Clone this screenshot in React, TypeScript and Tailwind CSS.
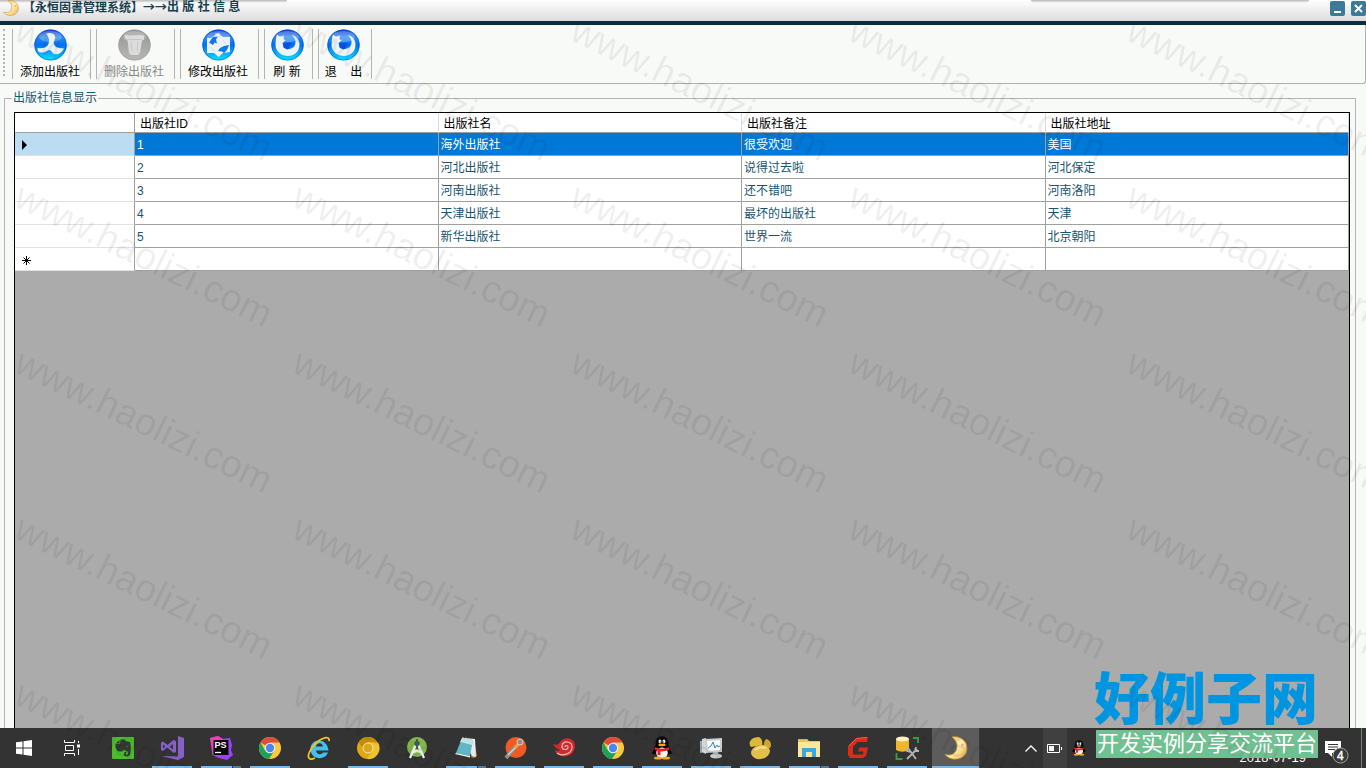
import type { ReactNode } from 'react';

const FONT = 'font-["Liberation_Sans","Noto_Sans_CJK_SC",sans-serif]';

type Publisher = { id: number; name: string; remark: string; address: string };

const publishers: Publisher[] = [
  { id: 1, name: '海外出版社', remark: '很受欢迎', address: '美国' },
  { id: 2, name: '河北出版社', remark: '说得过去啦', address: '河北保定' },
  { id: 3, name: '河南出版社', remark: '还不错吧', address: '河南洛阳' },
  { id: 4, name: '天津出版社', remark: '最坏的出版社', address: '天津' },
  { id: 5, name: '新华出版社', remark: '世界一流', address: '北京朝阳' },
];

const columns = ['出版社ID', '出版社名', '出版社备注', '出版社地址'];

/* ===== Icons ===== */

function Moon({ className }: { className: string }) {
  return (
    <svg viewBox="0 0 24 24" className={className} aria-hidden="true">
      <defs>
        <linearGradient id="moon" x1="0" y1="0" x2="1" y2="1">
          <stop offset="0" stopColor="#f6c14a" />
          <stop offset=".5" stopColor="#fdeeb0" />
          <stop offset="1" stopColor="#eeb345" />
        </linearGradient>
      </defs>
      <path
        d="M8 1c8-1.500 15 3.500 15 11.500S15.500 24 8.500 23C5.500 22.500 2.500 20.500 1 18.500c5.500 1.500 10-.5 11.500-5C14 8.500 12 4 8 1z"
        fill="url(#moon)"
        stroke="#c98c2c"
        strokeWidth=".8"
      />
      <circle cx="18.500" cy="9" r="1.600" fill="#f3a99a" />
    </svg>
  );
}

function Orb({ gray, children }: { gray?: boolean; children: ReactNode }) {
  const fill = gray ? 'url(#orb-gray)' : 'url(#orb-blue)';
  return (
    <svg viewBox="0 0 33 32" className="h-[32px] w-[33px] shrink-0" aria-hidden="true">
      <defs>
        <linearGradient id="orb-blue" x1="0" y1="0" x2="0" y2="1">
          <stop offset="0" stopColor="#0b30d0" />
          <stop offset=".25" stopColor="#2c8cf4" />
          <stop offset=".5" stopColor="#0070f4" />
          <stop offset="1" stopColor="#10e4ff" />
        </linearGradient>
        <linearGradient id="orb-gray" x1="0" y1="0" x2="0" y2="1">
          <stop offset="0" stopColor="#949494" />
          <stop offset=".5" stopColor="#a6a6a6" />
          <stop offset="1" stopColor="#b8b8b8" />
        </linearGradient>
      </defs>
      <ellipse cx="16.500" cy="16" rx="16.200" ry="15.500" fill={fill} />
      <ellipse cx="16.500" cy="16" rx="15.700" ry="15" fill="none" stroke={gray ? '#999' : '#0a50d8'} strokeOpacity=".5" />
      <ellipse cx="16.500" cy="7.500" rx="11.500" ry="5.500" fill="#fff" opacity=".25" />
      {children}
    </svg>
  );
}

function SwirlIcon() {
  return (
    <Orb>
      <path
        d="M12 5c3-2 8-1 9 2 1 3-2 5-1 8 1 4 5 4 10 4.500C28 24 24 26 20 25c-2-1-2-3-4-4-3 0-5 4-11 2-1-1-1.500-2-1.500-4 5 1 9 0 11-4 1-3 1-7-2.500-10z"
        fill="#eef2f3"
      />
    </Orb>
  );
}

function BinIcon() {
  return (
    <Orb gray>
      <path d="M7 6l4 .5L22 6l4 .5v4l-2 1-2 12-2 2.500h-7L11 24 9.500 11 7 9.500z" fill="#dcdcdc" />
      <path d="M9 10.500h15M13 13l1 9M20 13l-1 9" stroke="#c6c6c6" fill="none" />
    </Orb>
  );
}

function EditIcon() {
  return (
    <Orb>
      <path d="M5 9h4l7-5 5 4h7v15l-7 1-4.500 4L12 24H5z" fill="#eef2f3" />
      <path d="M7 13.500l4-5.500 5-.5-2 3 1 4-2.500-1L11 16zM16 22l2-3 4-2 5-1-2 5-3 3-2-1.500z" fill="#0a78f0" />
      <path d="M13 5l4-1 2 3-4 1zM21 11l3 4M9 18l3 4" stroke="#b9d9f6" fill="none" strokeWidth=".8" />
    </Orb>
  );
}

function FoxIcon() {
  return (
    <Orb>
      <path
        d="M6 5.500c1 1 2 2 4 2l3-1-.5 3.500 2 1.500-3 2.500 1 4c2 3 8 3 11-1 2-4 1-8-3-11 5 1 8 5 8 9.500C28.500 23 23 27 17 27S5 23 4.500 16.500c0-4 .5-8 1.500-11z"
        fill="#eef2f3"
      />
      <path d="M12.500 14.500l4-1 5 .500-2 2.500-2 .5 2 1-3 2.500-4-2z" fill="#0a50e0" />
    </Orb>
  );
}

function Chrome() {
  return (
    <svg viewBox="0 0 24 24" className="size-6" aria-hidden="true">
      <circle cx="12" cy="12" r="11" fill="#fbc93d" />
      <path d="M12 12L2.500 6.500A11 11 0 0 1 21.500 6.500H12z" fill="#df4b3d" />
      <path d="M2.500 6.500A11 11 0 0 0 11 23l5.500-8.500L12 12 7 14.500z" fill="#1fa15d" />
      <circle cx="12" cy="12" r="5.300" fill="#f3f3f3" />
      <circle cx="12" cy="12" r="4.200" fill="#4b87ee" />
    </svg>
  );
}

function Penguin({ className }: { className: string }) {
  return (
    <svg viewBox="0 0 24 24" className={className} aria-hidden="true">
      <ellipse cx="12" cy="14" rx="8" ry="8.500" fill="#050505" />
      <path d="M4.500 12L2 17.500l2 1 3-4zM19.500 12l2.500 5.500-2 1-3-4z" fill="#050505" />
      <ellipse cx="12" cy="7" rx="6.500" ry="6.800" fill="#0a0a0a" />
      <ellipse cx="12" cy="17" rx="5.800" ry="5.500" fill="#f5f5f5" />
      <ellipse cx="10" cy="5.500" rx="1.400" ry="2" fill="#fff" />
      <ellipse cx="14" cy="5.500" rx="1.400" ry="2" fill="#fff" />
      <path d="M10.300 5.500v1M13.700 5.500v1" stroke="#000" />
      <ellipse cx="12" cy="9" rx="3.700" ry="1.200" fill="#f6a623" />
      <path d="M5 11q7 3.500 14 0l.5 2.500q-5 2.500-9 2V19H7.500v-4L4.500 13.500z" fill="#e8202a" />
      <ellipse cx="8" cy="22" rx="4" ry="1.500" fill="#f6a623" />
      <ellipse cx="16" cy="22" rx="4" ry="1.500" fill="#f6a623" />
    </svg>
  );
}

function Icon({ children }: { children: ReactNode }) {
  return (
    <svg viewBox="0 0 24 24" className="size-6" fill="none" aria-hidden="true">
      {children}
    </svg>
  );
}

/* ===== Taskbar entries ===== */

type Task = { name: string; icon: ReactNode; running?: boolean; stacked?: boolean; active?: boolean };

const tasks: Task[] = [
  {
    name: 'Evernote',
    icon: (
      <Icon>
        <rect x="1" y="1" width="22" height="22" rx="1" fill="#4dbb2e" />
        <path
          d="M9.500 3.500h4L15 5l4 1c1 2 1 6 .5 10 0 3-1.500 4.500-4 4.500-3.500 0-3.500-5 0-5v1.500c-1.500 0-1 2 .5 1.800 1.500-.3 1-3.300-.5-3.800l-3-1-1 1.500H8c-2.500-.5-4-4-3.500-8h4.500z"
          fill="#323b30"
        />
        <path d="M8.500 4L5 7h3.500z" fill="#323b30" />
        <path d="M15 10.500q1.500-1 2 .5z" fill="#4dbb2e" />
      </Icon>
    ),
  },
  {
    name: 'Visual Studio',
    running: true,
    icon: (
      <Icon>
        <path d="M18 0l6 2v19l-6 3-17-4 17 .5z" fill="#8661c5" />
        <path
          d="M1 6.500L3 5.500l4.500 3.500 6-5 2.500 1v11l-2.500 1-6-5.500L3 15l-2-1zM13 8l-3.500 2.700L13 13.500zM3 8.500v4l2.300-2z"
          fill="#8661c5"
          fillRule="evenodd"
        />
      </Icon>
    ),
  },
  {
    name: 'PhpStorm',
    running: true,
    stacked: true,
    icon: (
      <Icon>
        <path d="M1 2l8-2 5 3 7-1 2 7-1 5 2 5-6 5-8-2-7-3V9z" fill="#9a45f4" />
        <path d="M1 2l8-2 5 3-9 10-2 3z" fill="#f23fb0" />
        <rect x="4.500" y="4" width="15" height="15" fill="#080808" />
        <text x="5.500" y="12" fontSize="9" fontWeight="700" fill="#fff">PS</text>
        <path d="M6 16.500h6" stroke="#fff" strokeWidth="1.300" />
      </Icon>
    ),
  },
  { name: 'Chrome', running: true, icon: <Chrome /> },
  {
    name: 'Internet Explorer',
    icon: (
      <Icon>
        <path
          d="M21.500 14.500H9c.5 4.500 5.500 4.500 7 2h5C18 25 3.500 24 3.500 13S20 1 21.500 14.500zM9 10.500h7c-.5-4.500-6.500-4.500-7 0z"
          fill="#45bff0"
          fillRule="evenodd"
        />
        <path d="M22 5c1-6-8-3-13 2C3 13-1 21 3 23c1 .5 3 0 5-1" stroke="#f3c321" strokeWidth="1.800" />
      </Icon>
    ),
  },
  {
    name: 'Chrome Canary',
    running: true,
    icon: (
      <Icon>
        <circle cx="12" cy="12" r="11" fill="#dfa812" />
        <path d="M2.500 6.500A11 11 0 0 1 21.500 6.500H12L8 14z" fill="#c48d08" />
        <path d="M12 6.500h10A11 11 0 0 1 11 23l5.500-8z" fill="#f0c22c" />
        <circle cx="12" cy="12" r="5" fill="#dba51c" stroke="#f8e8b0" />
      </Icon>
    ),
  },
  {
    name: 'Android Studio',
    icon: (
      <Icon>
        <circle cx="12" cy="11" r="10" fill="#82b94b" />
        <path d="M11 8L5 22M13 8l6 14M7 17q5-4 10 0" stroke="#ececec" strokeWidth="2.200" />
        <circle cx="12" cy="7.500" r="2.800" fill="#455a55" />
        <path d="M12 3v3M12 10v3" stroke="#455a55" strokeWidth="2" />
      </Icon>
    ),
  },
  {
    name: 'Notepad',
    running: true,
    stacked: true,
    icon: (
      <Icon>
        <path d="M20 3l3 17-3 2-3-1z" fill="#b0893f" />
        <path d="M8 2l13 1 1 18-4-1z" fill="#e6ecec" />
        <path d="M8 2l11 2-3 16-14-3z" fill="#5fb6c4" />
        <path d="M8 2l11 2-1 5L6 6z" fill="#bfe2e6" />
        <path d="M2 17l14 3v1.500L1 18z" fill="#f3f5f5" />
        <path d="M9 1v3M12 1.500v3M15 2v3M18 2.500v3" stroke="#d9d9d9" />
      </Icon>
    ),
  },
  {
    name: 'Postman',
    running: true,
    icon: (
      <Icon>
        <circle cx="13" cy="11.500" r="10.500" fill="#f15a24" />
        <path d="M3 22L13 10" stroke="#8d8f92" strokeWidth="4" />
        <path d="M5 19l10-10" stroke="#d7d2cb" strokeWidth="1.500" />
        <path d="M12 12l4-5" stroke="#f3a13c" strokeWidth="3" />
        <circle cx="17" cy="6" r="3" fill="#8d8f92" stroke="#d7d2cb" />
      </Icon>
    ),
  },
  {
    name: 'Snail',
    running: true,
    icon: (
      <Icon>
        <path d="M1 8c4 2 6 0 8-3 4-5 14-3 14 5 0 9-10 13-16 9-2-1-4-3-4-5 2 1 4 1 5 0C5 13 2 11 1 8z" fill="#cf2a2c" />
        <path d="M5 17c5 4 15 1 15-6 0-6-9-7-10-1-.5 4 6 5 6 1 0-2-3-2-3 0" stroke="#f5b9b9" strokeWidth="1.200" />
      </Icon>
    ),
  },
  { name: 'Chrome 2', running: true, icon: <Chrome /> },
  { name: 'QQ', running: true, icon: <Penguin className="size-6" /> },
  {
    name: '资源监视器',
    running: true,
    icon: (
      <Icon>
        <path d="M1 5l5-1v12l-5 1z" fill="#9ea4a7" />
        <path d="M3 3l4-1v16l-4-2z" fill="#d3d6d8" />
        <path d="M6 3l17-1v14l-16 1z" fill="#c9ced1" />
        <path d="M8 5l13-1v10l-12 1z" fill="#fafcfd" />
        <path d="M9 12l3-2 2-4 2 6 2-3 1 2 2-1" stroke="#3285bd" />
        <ellipse cx="17" cy="20" rx="6" ry="2.500" fill="#c7ccce" />
        <path d="M14 16h5v3h-5z" fill="#aab0b3" />
      </Icon>
    ),
  },
  {
    name: 'Navicat',
    running: true,
    icon: (
      <Icon>
        <path d="M11 1c3 2 4 5 3 8L3 11C-1 6 4 1 11 1z" fill="#dcb83c" />
        <path d="M18 3c5 1 6 6 4 9-2 0-6-1-6-4 0-2 1-4 2-5z" fill="#cfa72d" />
        <ellipse cx="12.500" cy="16" rx="9.500" ry="7" fill="#e3c04a" transform="rotate(-12 12.500 16)" />
        <path d="M7 14q5-4 11-2" stroke="#f6e08b" strokeWidth="2" />
      </Icon>
    ),
  },
  {
    name: '文件资源管理器',
    running: true,
    stacked: true,
    icon: (
      <Icon>
        <path d="M1 3h9l2 2h11v16H1z" fill="#ecc35b" />
        <path d="M1 6h22v15H1z" fill="#fde69a" />
        <path d="M2 3.500h7" stroke="#e9a93a" />
        <path d="M5 21v-9h14v9h-4v-5H9v5z" fill="#3aa8e0" />
      </Icon>
    ),
  },
  {
    name: 'GitBox',
    running: true,
    icon: (
      <Icon>
        <path d="M22 1l-1 5H11.500L7 11v7.500h10l.5-3H12l1.500-4H22L20 20l-3 2H4l-2-3v-9L10 2z" fill="#dc2a1d" />
        <path d="M21 1.500l-10.500 1L3 10" stroke="#f1604c" />
      </Icon>
    ),
  },
  {
    name: 'SQL 工具',
    running: true,
    icon: (
      <Icon>
        <path d="M1 3v11q6 3.500 13 0V3z" fill="#f1b62c" />
        <ellipse cx="7.500" cy="3" rx="6.500" ry="2.500" fill="#fdf0c2" />
        <path d="M18 2h5v5M1.500 17v6h6" stroke="#38a03c" strokeWidth="1.800" />
        <path d="M13 12l8 11M22 13l-10 10M13 12l-1 3 3 1M21 11l-1 4 4 0" stroke="#aeb4b8" strokeWidth="1.800" />
      </Icon>
    ),
  },
  { name: '永恒图书管理系统', running: true, active: true, icon: <Moon className="size-6" /> },
];

/* ===== Window parts ===== */

function TitleBar() {
  return (
    <header className="relative flex h-[25px] shrink-0 items-start justify-between border-b-4 border-[#0a2e3f] bg-linear-to-b from-white to-[#dcdcdc]">
      <div className="absolute top-0 left-0 h-[3px] w-[21%] rounded-br-full bg-linear-to-b from-[#b8b8b8] to-transparent" />
      <div className="absolute top-0 right-[57px] h-[3px] w-[278px] rounded-b-full bg-linear-to-b from-[#b8b8b8] to-transparent" />
      <div className="relative flex items-start gap-[4px] pl-[3px]">
        <Moon className="size-4" />
        <h1 className="flex text-[12px] leading-[14px] font-bold text-[#17404f]">
          <span className='font-["Noto_Sans_CJK_SC",sans-serif]'>【永恒固書管理系统】→→</span>
          <span className="whitespace-pre">出 版 社 信 息</span>
        </h1>
      </div>
      <div className="flex gap-[6px] pt-px">
        <button type="button" aria-label="最小化" className="flex size-[15px] items-end justify-center rounded-[2px] bg-[#3c7a98] pb-[3px]">
          <span className="h-[2px] w-[7px] bg-white" />
        </button>
        <button type="button" aria-label="关闭" className="flex size-[15px] items-center justify-center rounded-[2px] bg-[#3c7a98]">
          <svg viewBox="0 0 9 9" className="size-[9px]" aria-hidden="true">
            <path d="M1 1l7 7M8 1L1 8" stroke="#fff" strokeWidth="2" />
          </svg>
        </button>
      </div>
    </header>
  );
}

function ToolButton({ label, icon, disabled, width }: { label: string; icon: ReactNode; disabled?: boolean; width: string }) {
  return (
    <button
      type="button"
      disabled={disabled}
      className={`flex h-[50px] flex-col items-center justify-start border-x border-[#b4b4b4] pr-[3px] text-[12px] whitespace-pre text-black disabled:text-[#8a8a8a] ${width}`}
    >
      {icon}
      <span className="shrink-0 leading-[22px]">{label}</span>
    </button>
  );
}

function Toolbar() {
  return (
    <div className="flex h-[59px] shrink-0 gap-[5px] rounded-br-[3px] border-r border-b border-[#b0b0b0] pt-[4px] pl-[3px]">
      <div className="mr-px h-[47px] w-[3px] border-l-2 border-dotted border-[#b4b4b4]" />
      <ToolButton label="添加出版社" icon={<SwirlIcon />} width="w-[79px]" />
      <ToolButton label="删除出版社" icon={<BinIcon />} width="w-[79px]" disabled />
      <ToolButton label="修改出版社" icon={<EditIcon />} width="w-[79px]" />
      <ToolButton label="刷 新" icon={<FoxIcon />} width="w-[49px]" />
      <ToolButton label="退    出" icon={<FoxIcon />} width="w-[54px]" />
    </div>
  );
}

function PublisherGrid() {
  return (
    <div className="min-h-0 flex-1 border border-b-0 border-black bg-[#ababab]">
      <table className="w-full table-fixed border-separate border-spacing-0 bg-white text-left text-[12px] leading-[16px] text-[#17566e]">
        <colgroup>
          <col className="w-[120px]" />
          <col />
          <col />
          <col />
          <col />
        </colgroup>
        <thead>
          <tr className="h-[20px] text-black">
            <th className="border-r border-b border-[#a0a0a0] p-0" aria-label="行" />
            {columns.map((name) => (
              <th key={name} className="border-r border-b border-r-[#dcdcdc] border-b-[#a0a0a0] pt-[2px] pb-0 pl-[5px] font-normal">
                {name}
              </th>
            ))}
          </tr>
        </thead>
        <tbody>
          {publishers.map((p, i) => {
            const selected = i === 0;
            const cell = 'border-r border-b border-[#a0a0a0] pt-[2px] pb-0 pl-[2px]';
            return (
              <tr key={p.id} className={selected ? 'h-[23px] bg-[#0078d7] text-white' : 'h-[23px]'}>
                <th className={`border-r border-b border-r-[#a0a0a0] border-b-[#e2e2e2] pt-[2px] pb-0 pl-[7px] ${selected ? 'bg-[#bcdcf4]' : ''}`}>
                  {selected && (
                    <svg viewBox="0 0 5 10" className="h-[10px] w-[5px]" aria-label="当前行">
                      <path d="M0 0l5 5-5 5z" fill="#000" />
                    </svg>
                  )}
                </th>
                <td className={cell}>{p.id}</td>
                <td className={cell}>{p.name}</td>
                <td className={cell}>{p.remark}</td>
                <td className={cell}>{p.address}</td>
              </tr>
            );
          })}
          <tr className="h-[23px]">
            <th className="border-r border-b border-r-[#a0a0a0] border-b-[#e2e2e2] pt-[2px] pb-0 pl-[7px]">
              <svg viewBox="0 0 9 9" className="size-[9px]" aria-label="新行">
                <path d="M4.500 0v9M0 4.500h9M1.500 1.500l6 6M7.500 1.500l-6 6" stroke="#000" />
              </svg>
            </th>
            {columns.map((name) => (
              <td key={name} className="border-r border-b border-[#a0a0a0] p-0" />
            ))}
          </tr>
        </tbody>
      </table>
    </div>
  );
}

function TaskButton({ task }: { task: Task }) {
  return (
    <button
      type="button"
      aria-label={task.name}
      className={`flex h-full w-[48px] shrink-0 flex-col items-center justify-between pt-[8px] ${task.active ? 'border-r border-[#3a3a3a] bg-[#5c5c5c]' : ''}`}
    >
      {task.icon}
      {task.running && (
        <span className={`flex h-[2px] bg-[#76b9ed] ${task.active ? 'w-full' : 'w-[40px]'}`}>
          {task.stacked && <span className="ml-auto w-[9px] border-l border-[#333] bg-[#557a99]" />}
        </span>
      )}
    </button>
  );
}

function Taskbar() {
  return (
    <footer className="flex h-[40px] shrink-0 items-center justify-between bg-[#333333]">
      <div className="flex h-full items-center gap-px">
        <button type="button" aria-label="开始" className="flex w-[48px] justify-center">
          <svg viewBox="0 0 16 16" className="size-4" fill="#fff" aria-hidden="true">
            <path d="M0 2.300L6.500 1.400v6.100H0zM7.500 1.200L16 0v7.500H7.500zM0 8.500h6.500v6.100L0 13.700zM7.500 8.500H16V16l-8.500-1.200z" />
          </svg>
        </button>
        <button type="button" aria-label="任务视图" className="mr-px flex w-[48px] justify-center pr-[2px]">
          <svg viewBox="0 0 16 16" className="size-4" fill="none" stroke="#fff" aria-hidden="true">
            <path d="M.5 0v2.500h10V0M.5 16v-2.500h10V16M1.500 5.500h8v5h-8zM14.500 1v2M14.500 9v6" />
            <path d="M13 4.500h3v3h-3z" fill="#fff" stroke="none" />
          </svg>
        </button>
        {tasks.map((task) => (
          <TaskButton key={task.name} task={task} />
        ))}
      </div>
      <div className="flex h-full items-center">
        <button type="button" aria-label="显示隐藏的图标" className="flex w-[24px] justify-center">
          <svg viewBox="0 0 12 7" className="h-[7px] w-[12px]" fill="none" stroke="#fff" aria-hidden="true">
            <path d="M.5 6.500L6 1l5.500 5.500" strokeWidth="1.300" />
          </svg>
        </button>
        <span className="flex h-full w-[24px] items-center justify-center bg-[#404040]">
          <svg viewBox="0 0 15 9" className="h-[9px] w-[15px]" fill="none" stroke="#fff" aria-label="电池">
            <path d="M.5.500h12v8H.5zM14.500 3v3" />
            <path d="M2 2h5v5H2z" fill="#fff" stroke="none" />
          </svg>
        </span>
        <span className="flex w-[24px] justify-center">
          <Penguin className="size-4" />
        </span>
        <time className="mr-[14px] ml-[149px] self-end text-[13px] leading-[20px] text-white">2018-07-19</time>
        <button type="button" aria-label="通知" className="mr-[12px] flex w-[29px] justify-end self-end pb-[4px]">
          <svg viewBox="0 0 25 24" className="h-[24px] w-[25px]" aria-hidden="true">
            <path d="M1 1h16v12H8v4l-4-4H1z" fill="#fff" />
            <path d="M4 4.500h10M4 7h10M4 9.500h7" stroke="#333" />
            <circle cx="16.500" cy="15.500" r="7.500" fill="#3a3a3a" stroke="#a0a0a0" />
            <text x="13" y="20" fontSize="12" fill="#fff" stroke="#fff" strokeWidth=".4">4</text>
          </svg>
        </button>
        <span className="h-full w-[5px] border-l border-[#7a7a7a]" />
      </div>
    </footer>
  );
}

/* ===== Overlays ===== */

function Watermark() {
  const rows = [0, 1, 2, 3, 4];
  const cols = [0, 1, 2, 3, 4];
  return (
    <svg className="pointer-events-none absolute inset-0 size-full" fontSize="38" fillOpacity=".07" aria-hidden="true">
      {rows.map((r) =>
        cols.map((c) => (
          <text key={`${r}-${c}`} transform={`translate(${12 + c * 278} ${39 + r * 166}) rotate(26)`}>
            www.haolizi.com
          </text>
        )),
      )}
    </svg>
  );
}

function SiteBadge() {
  return (
    <div className="pointer-events-none absolute right-[48px] bottom-[10px] flex flex-col items-end">
      <strong className="text-[56px] leading-[60px] font-black text-[#0095e0]">好例子网</strong>
      <span className="bg-[#70c092] px-px text-[22px] leading-[28px] text-white">开发实例分享交流平台</span>
    </div>
  );
}

export default function App() {
  return (
    <div className={`relative flex h-screen flex-col overflow-hidden bg-[#f8faf7] ${FONT}`}>
      <TitleBar />
      <Toolbar />
      <main className="flex min-h-0 flex-1 pt-[6px] pr-[10px] pl-[4px]">
        <fieldset className="flex min-w-0 flex-1 flex-col border border-b-0 border-[#b4b4b4] pt-[6px] pr-[5px] pl-[9px]">
          <legend className="-ml-[2px] px-px text-[12px] leading-[16px] text-[#17566e]">出版社信息显示</legend>
          <PublisherGrid />
        </fieldset>
      </main>
      <Taskbar />
      <SiteBadge />
      <Watermark />
    </div>
  );
}
